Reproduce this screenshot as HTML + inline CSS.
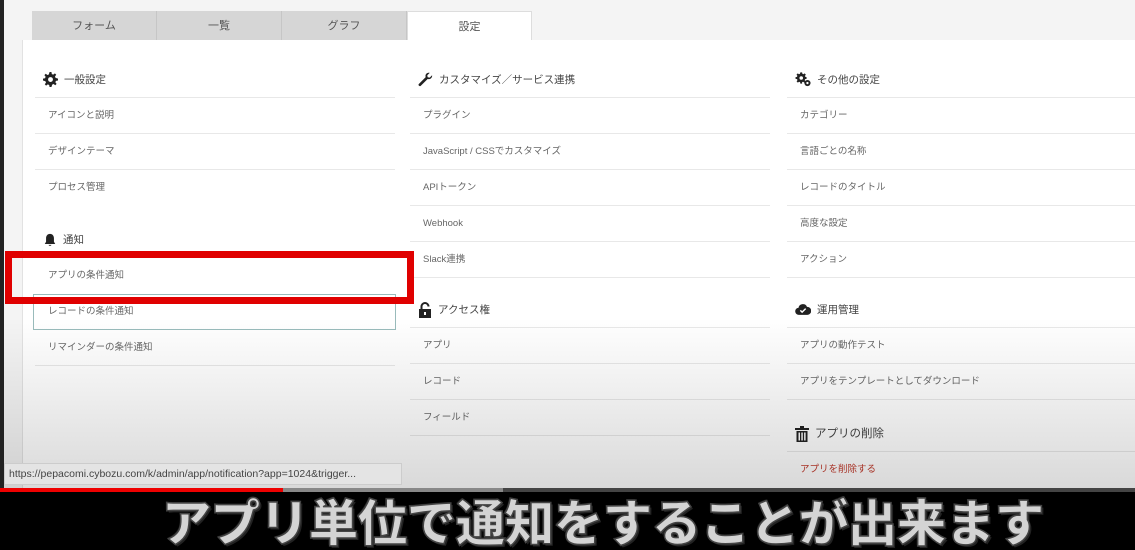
<!DOCTYPE html><html><head><meta charset="utf-8"><style>
*{margin:0;padding:0;box-sizing:border-box}
html,body{width:1135px;height:550px;overflow:hidden}
body{background:#000;font-family:"Liberation Sans","Noto Sans CJK JP",sans-serif;position:relative}
.scr{position:absolute;left:0;top:0;width:1135px;height:488px;background:#f4f4f4;overflow:hidden}
.lstrip{position:absolute;left:0;top:0;width:4px;height:488px;background:#222}
.tabs{position:absolute;left:32px;top:11px;height:30px;display:flex}
.tab{width:125px;height:30px;background:#d6d6d6;border-right:1px solid #c6c6c6;color:#555;font-size:11px;text-align:center;line-height:30px}
.tab.on{background:#fff;border:1px solid #ddd;border-bottom:none;height:31px}
.panel{position:absolute;left:22px;top:40px;width:1120px;height:460px;background:#fff;border-left:1px solid #e2e2e2}
.col{position:absolute;top:62px}
.h{height:36px;line-height:32px;font-size:10.5px;color:#444;display:flex;align-items:center;gap:6px;padding-left:8px;border-bottom:1px solid #e8e8e8}
.i{height:36px;line-height:36px;font-size:9.5px;color:#666;padding-left:13px;border-bottom:1px solid #e8e8e8}
.gap{height:34px}
.vig{position:absolute;left:0;top:0;width:1135px;height:488px;background:linear-gradient(to bottom,rgba(0,0,0,0) 0%,rgba(0,0,0,0) 65%,rgba(0,0,0,.15) 100%);pointer-events:none}
.url{position:absolute;left:4px;top:463px;width:398px;height:22px;background:#e4e4e4;border:1px solid #ccc;font-size:10.5px;color:#444;line-height:20px;padding-left:4px}
.red{position:absolute;left:5px;top:251px;width:409px;height:53px;border:7px solid #e00000}
.hov{position:absolute;left:33px;top:294px;width:363px;height:36px;border:1px solid #9bb}
.bar{position:absolute;top:488px;height:4px}
.sub{position:absolute;left:70px;top:492px;width:1065px;height:58px;overflow:hidden;text-align:center;font-size:50px;font-weight:900;font-family:"Noto Sans CJK JP",sans-serif;letter-spacing:-1px;color:#d4d4d4;line-height:56px;-webkit-text-stroke:1.5px #444;text-shadow:2px 2px 0 #222,-1px -1px 0 #222}
</style></head><body>
<div class="scr">
<div class="tabs"><div class="tab">フォーム</div><div class="tab">一覧</div><div class="tab">グラフ</div><div class="tab on">設定</div></div>
<div class="panel"></div>
<div class="col" style="left:35px;width:360px">
<div class="h"><svg width="15" height="15" viewBox="0 0 16 16"><path fill="#222" d="M7 0h2l.4 2.2 1.5.6 1.8-1.3 1.4 1.4-1.3 1.8.6 1.5L16 7v2l-2.2.4-.6 1.5 1.3 1.8-1.4 1.4-1.8-1.3-1.5.6L9 16H7l-.4-2.2-1.5-.6-1.8 1.3-1.4-1.4 1.3-1.8-.6-1.5L0 9V7l2.2-.4.6-1.5L1.5 3.3l1.4-1.4 1.8 1.3 1.5-.6z"/><circle cx="8" cy="8" r="2.6" fill="#fff"/></svg>一般設定</div>
<div class="i">アイコンと説明</div><div class="i">デザインテーマ</div><div class="i" style="border:none">プロセス管理</div>
<div class="gap" style="height:16px"></div>
<div class="h" style="border:none"><svg width="14" height="14" viewBox="0 0 16 16"><path fill="#222" d="M8 1c-3 0-4.5 2.5-4.5 5v4L2 12.5h12L12.5 10V6C12.5 3.5 11 1 8 1zM6.3 13.5a1.8 1.8 0 003.4 0z"/></svg>通知</div>
<div class="i" style="border-bottom:none">アプリの条件通知</div><div class="i">レコードの条件通知</div><div class="i">リマインダーの条件通知</div>
</div>
<div class="col" style="left:410px;width:360px">
<div class="h"><svg width="15" height="15" viewBox="0 0 16 16"><path fill="#222" d="M15 3.5l-2.5 2.5-2.2-.4-.4-2.2L12.5.9C10.5.3 8.3 1.5 8 3.6c-.1.7 0 1.3.2 1.8L1 12.6a1.4 1.4 0 002 2l7.3-7.2c.5.2 1.1.3 1.8.2 2.1-.3 3.3-2.5 2.9-4.1z"/></svg>カスタマイズ／サービス連携</div>
<div class="i">プラグイン</div><div class="i">JavaScript / CSSでカスタマイズ</div><div class="i">APIトークン</div><div class="i">Webhook</div><div class="i">Slack連携</div>
<div class="gap" style="height:14px"></div>
<div class="h"><svg width="14" height="16" viewBox="0 0 14 16"><path d="M3.5 7V4.5a3.5 3.5 0 017 0" fill="none" stroke="#222" stroke-width="2"/><rect x="1" y="7" width="12" height="9" fill="#222"/><rect x="6" y="10" width="2" height="3" fill="#fff"/></svg>アクセス権</div>
<div class="i">アプリ</div><div class="i">レコード</div><div class="i">フィールド</div>
</div>
<div class="col" style="left:787px;width:360px">
<div class="h"><svg width="16" height="15" viewBox="0 0 18 16"><g fill="#222"><path d="M6 0h2l.3 1.6 1.1.5 1.4-1 1.4 1.4-1 1.4.5 1.1L13 5.3v2l-1.6.3-.5 1.1 1 1.4-1.4 1.4-1.4-1-1.1.5L8 12.6H6l-.3-1.6-1.1-.5-1.4 1-1.4-1.4 1-1.4-.5-1.1L.6 7.3v-2l1.6-.3.5-1.1-1-1.4L3.1 1.1l1.4 1 1.1-.5z"/><circle cx="14" cy="12" r="3.5"/></g><circle cx="7" cy="6.3" r="2" fill="#fff"/><circle cx="14" cy="12" r="1.3" fill="#fff"/></svg>その他の設定</div>
<div class="i">カテゴリー</div><div class="i">言語ごとの名称</div><div class="i">レコードのタイトル</div><div class="i">高度な設定</div><div class="i">アクション</div>
<div class="gap" style="height:14px"></div>
<div class="h"><svg width="16" height="13" viewBox="0 0 18 14"><path fill="#222" d="M4.5 13A4 4 0 014 5a5 5 0 019.5-1A4.5 4.5 0 0114 13z"/><path d="M6 8l2 2 4-4" stroke="#fff" stroke-width="1.6" fill="none"/></svg>運用管理</div>
<div class="i">アプリの動作テスト</div><div class="i">アプリをテンプレートとしてダウンロード</div>
<div class="gap" style="height:16px"></div>
<div class="h" style="font-size:11.5px"><svg width="14" height="16" viewBox="0 0 14 16"><g fill="#222"><rect x="0" y="2" width="14" height="2"/><rect x="5" y="0" width="4" height="2"/><path d="M1.5 5h11v11h-11zM3.5 6.5v8h1.5v-8zm2.8 0v8h1.5v-8zm2.8 0v8h1.5v-8z" fill-rule="evenodd"/></g></svg>アプリの削除</div>
<div class="i" style="color:#c0392b;border:none">アプリを削除する</div>
</div>
<div class="hov"></div>
<div class="red"></div>
<div class="vig"></div>
<div class="lstrip"></div>
<div class="url">https://pepacomi.cybozu.com/k/admin/app/notification?app=1024&amp;trigger...</div>
</div>
<div class="bar" style="left:0;width:283px;background:#e00"></div>
<div class="bar" style="left:283px;width:220px;background:#888"></div>
<div class="bar" style="left:503px;width:632px;background:#444"></div>
<div class="sub">アプリ単位で通知をすることが出来ます</div>
</body></html>
